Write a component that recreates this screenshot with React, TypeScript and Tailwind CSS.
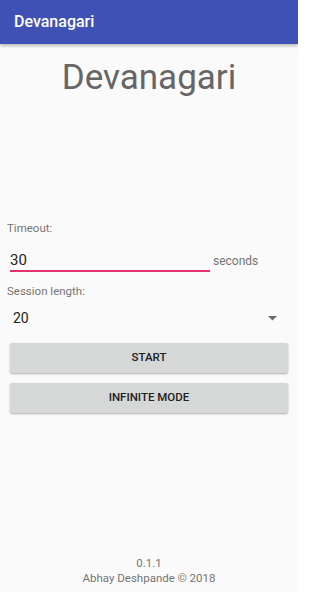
import React from "react";

export default function App() {
  return (
    <div
      className="flex flex-col h-[592px] w-[298px] bg-[#fafafa] overflow-hidden"
      style={{ fontFamily: "Roboto, 'Noto Sans', sans-serif" }}
    >
      <div className="h-[44px] shrink-0 bg-[#3f51b5] flex items-center px-[14px] shadow-[0_2px_3px_rgba(0,0,0,0.25)] relative z-10">
        <span className="text-white text-[16px] font-medium leading-none">Devanagari</span>
      </div>

      <div className="mt-[16px] text-center text-[35px] leading-[35px] text-[#666666]">
        Devanagari
      </div>

      <div className="mt-[126px] pl-[7px] text-[11.5px] leading-[14px] text-[#757575]">Timeout:</div>

      <div className="mt-[15px] ml-[10px] flex items-baseline">
        <div className="w-[200px] text-[15px] leading-[20px] text-[#212121] border-b-2 border-[#e2336b]">30</div>
        <span className="ml-[3px] text-[12px] text-[#757575]">seconds</span>
      </div>

      <div className="mt-[12px] pl-[7px] text-[11.5px] leading-[14px] text-[#757575]">Session length:</div>

      <div className="mt-[10px] pl-[13px] pr-[21px] flex items-center justify-between">
        <span className="text-[14px] leading-[20px] text-[#212121]">20</span>
        <svg width="9" height="5" viewBox="0 0 9 5">
          <path d="M0 0 L9 0 L4.5 4.5 Z" fill="#6b6b6b" />
        </svg>
      </div>

      <div className="mt-[15px] mx-[10px] flex flex-col gap-[10px]">
        <div className="h-[30px] bg-[#d6d7d7] rounded-[2px] shadow-[0_1px_2px_rgba(0,0,0,0.3)] flex items-center justify-center text-[11.5px] font-medium text-[#212121]">
          START
        </div>
        <div className="h-[30px] bg-[#d6d7d7] rounded-[2px] shadow-[0_1px_2px_rgba(0,0,0,0.3)] flex items-center justify-center text-[11.5px] font-medium text-[#212121]">
          INFINITE MODE
        </div>
      </div>

      <div className="mt-auto pb-[6px] text-center text-[11.5px] leading-[15px] text-[#757575]">
        <div>0.1.1</div>
        <div>Abhay Deshpande © 2018</div>
      </div>
    </div>
  );
}
